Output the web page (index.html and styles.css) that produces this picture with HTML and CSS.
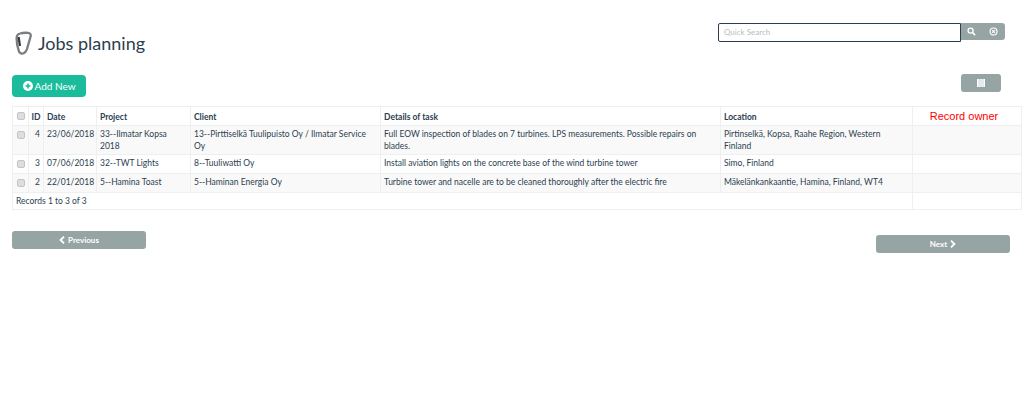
FILE: index.html
```html
<!DOCTYPE html>
<html lang="en">
<head>
  <meta charset="UTF-8" />
  <title>Jobs planning</title>
  <link rel="stylesheet" href="styles.css">
</head>
<body>

  <div class="header">
    <div class="title">
      <!-- carabiner logo -->
      <svg class="logo" width="18" height="24" viewBox="0 0 18 24">
        <path d="M5 2.5 C3 3 1.6 5 1.6 7.5 C1.6 11 2.6 17 4 20.5 C4.8 22.4 7 23 8.6 22.2 C10 21.6 11 20.6 11.8 18.6 L15.6 5.5 C16.2 3.4 15 2 13 1.8 C10 1.6 7 1.9 5 2.5 Z" fill="none" stroke="#7a7e7e" stroke-width="2.3"/>
        <path d="M3.6 6 L5 15" stroke="#2f3b3b" stroke-width="2.2" fill="none"/>
      </svg>
      <h1>Jobs planning</h1>
    </div>
    <div class="search">
      <input class="search-input" type="text" placeholder="Quick Search" autofocus>
      <div class="search-btns">
        <svg width="9" height="9" viewBox="0 0 10 10">
          <circle cx="4" cy="4" r="2.8" fill="none" stroke="#fff" stroke-width="1.5"/>
          <path d="M6 6 L9 9" stroke="#fff" stroke-width="1.8"/>
        </svg>
        <svg width="9" height="9" viewBox="0 0 10 10">
          <circle cx="5" cy="5" r="3.9" fill="none" stroke="#fff" stroke-width="1.3"/>
          <path d="M3.4 3.4 L6.6 6.6 M6.6 3.4 L3.4 6.6" stroke="#fff" stroke-width="1.2"/>
        </svg>
      </div>
    </div>
  </div>

  <div class="toolbar">
    <button class="add-btn">
      <svg width="10" height="10" viewBox="0 0 10 10">
        <circle cx="5" cy="5" r="5" fill="#fff"/>
        <path d="M5 2.5 V7.5 M2.5 5 H7.5" stroke="#1abc9c" stroke-width="1.6"/>
      </svg>
      Add New
    </button>
    <button class="cols-btn">
      <svg width="8" height="8" viewBox="0 0 8 8">
        <rect width="8" height="8" fill="#fff"/>
        <path d="M2 0 V8 M4 0 V8 M6 0 V8" stroke="#b9c0cc" stroke-width="0.7"/>
      </svg>
    </button>
  </div>

  <table class="jobs">
    <colgroup>
      <col class="c-check"><col class="c-id"><col class="c-date"><col class="c-project">
      <col class="c-client"><col class="c-details"><col class="c-location"><col class="c-owner">
    </colgroup>
    <thead>
      <tr>
        <th><span class="check"></span></th>
        <th>ID</th>
        <th>Date</th>
        <th>Project</th>
        <th>Client</th>
        <th>Details of task</th>
        <th>Location</th>
        <th class="owner">Record owner</th>
      </tr>
    </thead>
    <tbody>
      <tr>
        <td><span class="check"></span></td>
        <td class="num">4</td>
        <td>23/06/2018</td>
        <td>33--Ilmatar Kopsa 2018</td>
        <td>13--Pirttiselkä Tuulipuisto Oy / Ilmatar Service Oy</td>
        <td>Full EOW inspection of blades on 7 turbines. LPS measurements. Possible repairs on blades.</td>
        <td>Pirtinselkä, Kopsa, Raahe Region, Western Finland</td>
        <td></td>
      </tr>
      <tr>
        <td><span class="check"></span></td>
        <td class="num">3</td>
        <td>07/06/2018</td>
        <td>32--TWT Lights</td>
        <td>8--Tuuliwatti Oy</td>
        <td>Install aviation lights on the concrete base of the wind turbine tower</td>
        <td>Simo, Finland</td>
        <td></td>
      </tr>
      <tr>
        <td><span class="check"></span></td>
        <td class="num">2</td>
        <td>22/01/2018</td>
        <td>5--Hamina Toast</td>
        <td>5--Haminan Energia Oy</td>
        <td>Turbine tower and nacelle are to be cleaned thoroughly after the electric fire</td>
        <td>Mäkelänkankaantie, Hamina, Finland, WT4</td>
        <td></td>
      </tr>
    </tbody>
    <tfoot>
      <tr>
        <td colspan="7">Records 1 to 3 of 3</td>
        <td></td>
      </tr>
    </tfoot>
  </table>

  <div class="pager">
    <button class="page-btn">
      <svg width="6" height="8" viewBox="0 0 6 8"><path d="M5 0.7 L1.6 4 L5 7.3" fill="none" stroke="#fff" stroke-width="1.8"/></svg>
      Previous
    </button>
    <button class="page-btn next">
      Next
      <svg width="6" height="8" viewBox="0 0 6 8"><path d="M1 0.7 L4.4 4 L1 7.3" fill="none" stroke="#fff" stroke-width="1.8"/></svg>
    </button>
  </div>

</body>
</html>
```

FILE: styles.css
```css
body {
  margin: 0;
  padding: 23px 3px 0 12px;
  font-family: Lato, "Open Sans", sans-serif;
  font-size: 8.5px;
  color: #2c3e50;
  background: #fff;
}

button {
  font-family: inherit;
  border: none;
  cursor: pointer;
}

.header {
  display: flex;
  justify-content: space-between;
  align-items: flex-start;
  padding-right: 16px;
}

.title {
  display: flex;
  align-items: center;
  gap: 5px;
  margin-top: 8px;
  padding-left: 3px;
}

.title h1 {
  margin: 0;
  font-size: 18px;
  font-weight: 400;
  line-height: 24px;
}

.search {
  display: flex;
}

.search-input {
  width: 243px;
  height: 19px;
  box-sizing: border-box;
  padding: 0 5px 1px;
  font-family: inherit;
  font-size: 8px;
  color: #2c3e50;
  border: 1px solid #2c3e50;
  border-radius: 2px 0 0 2px;
  outline: none;
}

.search-input::placeholder {
  color: #b4bcc2;
}

.search-btns {
  display: flex;
  align-items: center;
  gap: 13px;
  width: 44px;
  height: 17px;
  box-sizing: border-box;
  padding-left: 6px;
  background: #96a5a3;
  border-radius: 0 3px 3px 0;
}

.toolbar {
  display: flex;
  justify-content: space-between;
  align-items: flex-start;
  margin-top: 19px;
  padding-right: 20px;
}

.add-btn {
  display: flex;
  align-items: center;
  justify-content: center;
  gap: 2px;
  width: 74px;
  height: 22px;
  margin-top: 1px;
  font-size: 10px;
  color: #fff;
  background: #1abc9c;
  border-radius: 4px;
}

.cols-btn {
  display: flex;
  align-items: center;
  justify-content: center;
  width: 40px;
  height: 18px;
  padding: 0;
  background: #96a5a3;
  border-radius: 3px;
}

.jobs {
  width: 1009px;
  margin-top: 9px;
  table-layout: fixed;
  border-collapse: collapse;
}

.c-check { width: 15.5px; }
.c-id { width: 15.5px; }
.c-date { width: 53px; }
.c-project { width: 94px; }
.c-client { width: 190px; }
.c-details { width: 340px; }
.c-location { width: 192px; }
.c-owner { width: 109px; }

.jobs th,
.jobs td {
  height: 14px;
  padding: 2px 3px;
  border: 1px solid #ecf0f1;
  line-height: 12px;
  text-align: left;
  vertical-align: top;
}

.jobs th {
  padding: 4px 3px 0;
  font-weight: 700;
}

.jobs tbody tr:nth-child(odd) {
  background: #f9f9f9;
}

.jobs tfoot td {
  height: 12px;
}

.jobs th.owner {
  padding: 3px 9px 1px 3px;
  font-family: "Liberation Sans", Arial, sans-serif;
  font-size: 11px;
  font-weight: 400;
  color: #f00;
  text-align: center;
}

.jobs td.num {
  text-align: right;
}

.check {
  display: block;
  width: 8px;
  height: 8px;
  margin: 3px 0 0 1px;
  background: #ddd;
  border: 1px solid #c4c4c4;
  border-radius: 2px;
  box-sizing: border-box;
}

.jobs th .check {
  margin-top: 1px;
}

.pager {
  display: flex;
  justify-content: space-between;
  align-items: flex-start;
  margin-top: 21px;
  padding-right: 11px;
}

.page-btn {
  display: flex;
  align-items: center;
  justify-content: center;
  gap: 3px;
  width: 134px;
  height: 18px;
  padding: 0;
  font-size: 8px;
  font-weight: 700;
  color: #fff;
  background: #96a5a3;
  border-radius: 3px;
}

.page-btn.next {
  margin-top: 4px;
}
```
